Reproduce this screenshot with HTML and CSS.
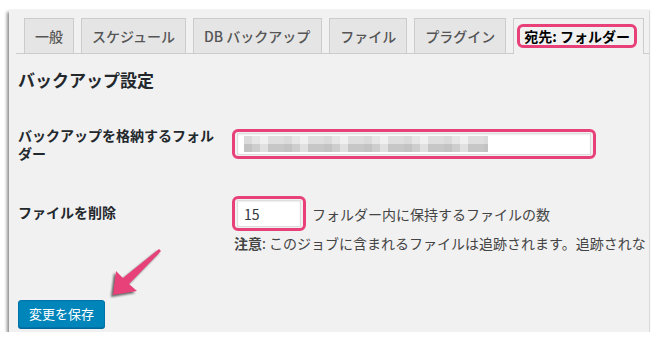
FILE: index.html
```html
<!DOCTYPE html>
<html lang="ja">
<head>
    <meta charset="UTF-8">
    <title>BackWPup ジョブ設定</title>
    <link rel="stylesheet" href="styles.css">
</head>
<body>
    <div class="wrap">
        <nav class="nav-tab-wrapper">
            <a class="nav-tab">一般</a>
            <a class="nav-tab">スケジュール</a>
            <a class="nav-tab">DB バックアップ</a>
            <a class="nav-tab">ファイル</a>
            <a class="nav-tab">プラグイン</a>
            <a class="nav-tab nav-tab-active"><span class="mark-tab">宛先: フォルダー</span></a>
        </nav>

        <h3 class="title">バックアップ設定</h3>

        <table class="form-table">
            <tr class="row-folder">
                <th>バックアップを格納するフォルダー</th>
                <td>
                    <span class="mark"><input type="text" class="regular-text blurred" value="" aria-label="フォルダー"></span>
                </td>
            </tr>
            <tr class="row-delete">
                <th>ファイルを削除</th>
                <td>
                    <div class="field">
                        <span class="mark"><input type="text" class="small-text" value="15" aria-label="ファイル数"></span>
                        <span class="inline-desc">フォルダー内に保持するファイルの数</span>
                    </div>
                    <p class="description"><strong>注意</strong>: このジョブに含まれるファイルは追跡されます。追跡されな</p>
                </td>
            </tr>
        </table>

        <p class="submit"><button class="button-primary">変更を保存</button></p>
    </div>

    <!-- annotation arrow drawn over the screenshot -->
    <svg class="arrow" width="660" height="343" viewBox="0 0 660 343">
        <polygon points="113,295 116,271 123,278 159,249 161,251 129,284 137,291" fill="#e8417a"/>
    </svg>
</body>
</html>
```

FILE: styles.css
```css
body {
    margin: 0;
    background-color: #fff;
    font-family: "Noto Sans CJK JP", "Noto Sans", sans-serif;
    color: #23282d;
}

.wrap {
    position: relative;
    width: 631px;
    height: 322px;
    margin: 10px 0 0 9px;
    padding-left: 9px;
    background-color: #f1f1f1;
    overflow: hidden;
    box-shadow: -2px 2px 3px rgba(0, 0, 0, 0.45), 1px 0 1px rgba(0, 0, 0, 0.12);
}

/* tabs */
.nav-tab-wrapper {
    display: flex;
    align-items: flex-end;
    gap: 7px;
    margin-left: -2px;
    padding: 8px 0 0 8px;
    border-bottom: 1px solid #ccc;
}

.nav-tab {
    display: block;
    padding: 5px 10px;
    border: 1px solid #ccc;
    border-bottom: none;
    background-color: #e5e5e5;
    color: #555;
    font-size: 14px;
    line-height: 24px;
    font-weight: 500;
    white-space: nowrap;
}

.nav-tab:nth-child(3) {
    padding-right: 11px;
}

.nav-tab-active {
    background-color: #f1f1f1;
    color: #000;
    margin-bottom: -1px;
    padding-bottom: 6px;
    font-weight: 600;
}

.mark-tab {
    display: inline-block;
    vertical-align: top;
    margin: 0 -4px 0 -7px;
    padding: 0 4px 0 4px;
    line-height: 18px;
    border: 3px solid #e8417a;
    border-radius: 6px;
}

.title {
    margin: 14px 0;
    font-size: 17px;
    line-height: 24px;
    font-weight: 600;
}

/* form */
.form-table {
    border-collapse: collapse;
}

.form-table th {
    width: 200px;
    padding: 20px 10px 20px 0;
    text-align: left;
    vertical-align: top;
    font-size: 14px;
    line-height: 18px;
    font-weight: 600;
}

.form-table td {
    padding: 23px 0 15px 4px;
    vertical-align: top;
    font-size: 14px;
}

.row-delete th {
    padding-top: 21px;
}

.row-delete td {
    padding-top: 14px;
}

.mark {
    display: inline-block;
    padding: 1px 2px;
    border: 3px solid #e8417a;
    border-radius: 6px;
}

.mark input {
    display: block;
    box-sizing: border-box;
    margin: 0;
    border: 1px solid #ddd;
    background-color: #fff;
    box-shadow: inset 0 1px 2px rgba(0, 0, 0, 0.07);
    font-family: "Noto Sans CJK JP", "Noto Sans", sans-serif;
    font-size: 14px;
    color: #32373c;
    outline: none;
}

.regular-text {
    width: 354px;
    height: 22px;
}

.blurred {
    background-image:
        repeating-linear-gradient(90deg, rgba(0, 0, 0, 0.05) 0 8px, transparent 8px 16px, rgba(255, 255, 255, 0.4) 16px 24px, rgba(0, 0, 0, 0.03) 24px 40px),
        linear-gradient(#e6e6e6 0 50%, #cdcdcd 50% 100%);
    background-size: 244px 16px;
    background-position: 6px 2px;
    background-repeat: no-repeat;
}

.small-text {
    width: 64px;
    height: 27px;
    padding: 0 6px;
}

.field {
    display: flex;
    align-items: center;
    gap: 6px;
}

.inline-desc {
    color: #444;
    font-size: 14px;
}

.description {
    margin: 2px 0 0 2px;
    line-height: 20px;
    color: #444;
    white-space: nowrap;
}

.description strong {
    font-weight: 600;
}

.submit {
    margin: 32px 0 0;
}

.button-primary {
    height: 28px;
    padding: 0 10px;
    border: 1px solid #0073aa;
    border-radius: 3px;
    background-color: #0085ba;
    box-shadow: 0 1px 0 #006799;
    color: #fff;
    font-family: "Noto Sans CJK JP", "Noto Sans", sans-serif;
    font-size: 13px;
    line-height: 26px;
    cursor: pointer;
}

.arrow {
    position: absolute;
    top: 0;
    left: 0;
    pointer-events: none;
    filter: drop-shadow(-2px 2px 1px rgba(0, 0, 0, 0.6));
}
```
